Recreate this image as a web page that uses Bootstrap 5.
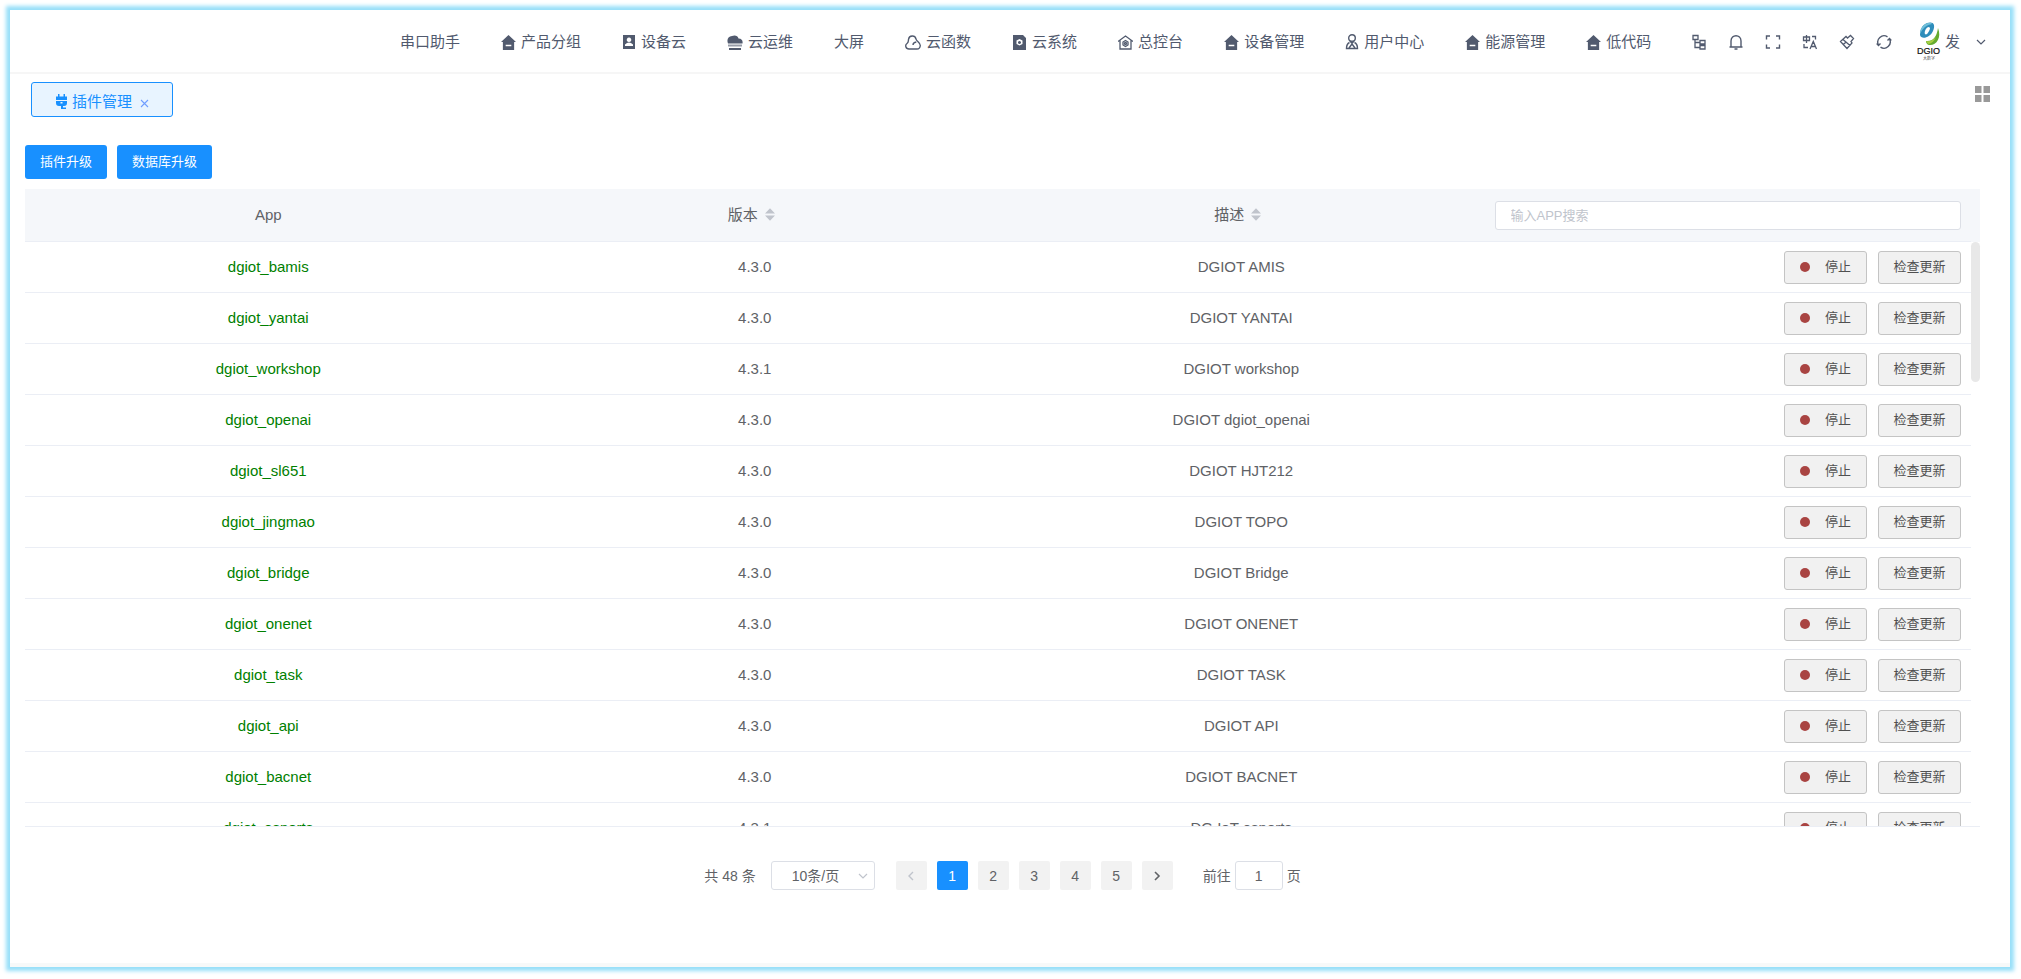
<!DOCTYPE html>
<html lang="zh-CN">
<head>
<meta charset="utf-8">
<meta name="viewport" content="width=device-width, initial-scale=1">
<title>插件管理</title>
<link rel="stylesheet" href="https://cdn.jsdelivr.net/npm/bootstrap@5.3.0/dist/css/bootstrap.min.css">
<style>
:root{--brand:#1890ff;--ink:#515a6e;--text:#606266;--rule:#ebeef5}
body{font-family:"Liberation Sans","Noto Sans CJK SC",sans-serif;font-size:14px;line-height:20px;font-weight:400;color:var(--text);background:#fff;min-height:100vh;padding:10px 11px 12px 10px}
.shell{min-height:calc(100vh - 22px);box-shadow:0 0 4px 4px #96dff9;background:#fff;border-bottom:4px solid #f7f9f9}
svg{display:block;flex:none}
.topbar{height:64px;border-bottom:2px solid #f6f6f6;padding:2px 24px 0 390px;color:var(--ink);font-size:15px}
.topbar a{color:var(--ink);text-decoration:none}
.menu-links{gap:41px}
.menu-links a{display:flex;align-items:center;gap:5px;white-space:nowrap}
.tool{border:0;background:none;padding:0;color:var(--ink)}
.tools{gap:21px}
.brand-mark{overflow:visible}
.tabs-row{padding:8px 20px 0 21px}
.page-tab{border:1px solid var(--brand);background:#e8f4ff;color:var(--brand);border-radius:3px;height:35px;font-size:15px;padding:4px 22px 0 23px}
.page-tab a{color:inherit;text-decoration:none}
.tab-close{border:0;background:none;color:#6f9dff;padding:0}
.content{padding:28px 30px 0 15px}
.run-bar{gap:10px}
.btn-run{height:34px;border:0;border-radius:3px;background:var(--brand);color:#fff;font-size:13px;line-height:20px;padding:0 15px}
.grid-frame{margin-top:10px;border-bottom:1px solid var(--rule);background:linear-gradient(#f5f7fa,#f5f7fa) 0 0/100% 53px no-repeat}
.grid-scroll{height:calc(100vh - 342px);overflow-y:auto;margin-right:9px;scrollbar-width:none}
.grid-scroll::-webkit-scrollbar{display:none}
.plugin-grid{table-layout:fixed;width:100%;text-align:center;border-collapse:separate;border-spacing:0;font-size:15px}
.plugin-grid th,.plugin-grid td{width:25%;padding:0 10px;height:51px;border-bottom:1px solid var(--rule);vertical-align:middle;font-weight:400}
.plugin-grid th{height:53px;background:#f5f7fa;position:sticky;top:0}
.grid-thumb{position:absolute;right:0;top:53px;width:9px;height:140px;border-radius:5px;background:#e8e8e8}
.app-name{color:green}
.sort-mark{display:inline-block;margin:0 7px;vertical-align:-1px}
.find-box{height:29px;border:1px solid #dcdfe6;border-radius:3px;font-size:13px;padding:0 15px;width:100%;display:block}
.find-box::placeholder{color:#c0c4cc;opacity:1}
.actions{gap:11px}
.btn-row{width:83px;height:33px;border:1px solid #c4c4c4;border-radius:3px;background:#f1f1f1;color:#505050;font-size:13px;line-height:20px;padding:0}
.btn-stop{gap:15px}
.dot{width:10px;height:10px;border-radius:50%;background:#a94442}
.pager{padding:34px 0 40px}
.pages{gap:10px;margin:0 30px 0 21px}
.pg{width:31px;height:29px;border:0;border-radius:2px;background:#f2f2f2;color:var(--text);padding:0}
.pg.on{background:var(--brand);color:#fff}
.pg:disabled{color:#c0c4cc}
.size-wrap{margin-left:15px}
.size-pick{width:104px;height:29px;border:1px solid #dcdfe6;border-radius:3px;background:#fff;color:var(--text);appearance:none;padding:0 0 0 20px}
.size-arrow{right:7px;top:10px;color:#c0c4cc;pointer-events:none}
.jump{width:48px;height:29px;border:1px solid #dcdfe6;border-radius:3px;text-align:center;color:var(--text);padding:0;margin:0 4px}
</style>
</head>
<body>
<svg class="d-none">
<symbol id="home" viewBox="0 0 16 16"><path fill="currentColor" fill-rule="evenodd" d="M8 0 16 7.500H14V16H2V7.500H0ZM5 10.500V12H11V10.500Z"/></symbol>
<symbol id="sort" viewBox="0 0 11 14"><path fill="#c0c4cc" d="M5.500 0 11 6H0ZM0 8H11L5.500 14Z"/></symbol>
</svg>
<div class="shell">
<nav class="topbar d-flex justify-content-between align-items-center">
<div class="menu-links d-flex align-items-center">
<a href="#">串口助手</a>
<a href="#"><svg width="15" height="15"><use href="#home"/></svg>产品分组</a>
<a href="#"><svg width="14" height="14" viewBox="0 0 14 14"><path fill="currentColor" fill-rule="evenodd" d="M1 0H13V14H1ZM7 2.500a2.300 2.300 0 1 0 .01 0ZM3 11H11V9.500Q9 7.500 7 7.500T3 9.500Z"/></svg>设备云</a>
<a href="#"><svg width="16" height="15" viewBox="0 0 16 15"><path fill="currentColor" d="M1 8.500C-.5 5 1 1 5 1C8-.5 11 1 11.500 3.500C15 3.500 16 6 15.500 8.500ZM2 13H14V15H2Z"/><path fill="currentColor" opacity=".6" d="M1 9.500H15V11.500H1Z"/></svg>云运维</a>
<a href="#">大屏</a>
<a href="#"><svg width="16" height="15" viewBox="0 0 16 15" fill="none" stroke="currentColor" stroke-width="1.400"><path d="M4 14C.5 14-.2 10 2 8.500C3.500 7.500 3.200 7 3.500 4.500C4.200 0 10 0 11 4C11.400 6.500 15.300 7.500 15.300 10.500Q15 14 12 14ZM8 10Q8 7.500 11.300 7"/></svg>云函数</a>
<a href="#"><svg width="15" height="15" viewBox="0 0 15 15"><path fill="currentColor" fill-rule="evenodd" d="M1 0H11L14 3V15H1ZM7.500 4 10.500 5.500V9L7.500 10.500 4.500 9V5.500ZM7.500 6a1.500 1.500 0 1 1-.01 0Z"/></svg>云系统</a>
<a href="#"><svg width="15" height="15" viewBox="0 0 15 15" fill="none" stroke="currentColor" stroke-width="1.300"><path d="M0 6.500 7.500 1 15 6.500M2 5V14H13V5M7.500 5.500 10 7V10L7.500 11.500 5 10V7Z"/><circle cx="7.500" cy="8.500" r="1"/></svg>总控台</a>
<a href="#"><svg width="15" height="15"><use href="#home"/></svg>设备管理</a>
<a href="#"><svg width="14" height="16" viewBox="0 0 14 16" fill="none" stroke="currentColor" stroke-width="1.400"><circle cx="7" cy="4" r="3.300"/><path d="M5 7 7 9.500 9 7M4.500 8.500Q1.500 10 1.500 14.500H12.500Q12.500 10 9.500 8.500M4 14 7 10 10 14"/></svg>用户中心</a>
<a href="#"><svg width="15" height="15"><use href="#home"/></svg>能源管理</a>
<a href="#"><svg width="15" height="15"><use href="#home"/></svg>低代码</a>
</div>
<div class="tools d-flex align-items-center">
<button class="tool" aria-label="结构"><svg width="16" height="16" viewBox="0 0 16 16" fill="none" stroke="currentColor" stroke-width="1.300"><path d="M2 1.500H7V5.500H2ZM4 5.500V13.500H9M4 8.500H9M9 6.500H14V10H9ZM9 11.500H14V15H9Z"/></svg></button>
<button class="tool" aria-label="通知"><svg width="16" height="16" viewBox="0 0 16 16" fill="none" stroke="currentColor" stroke-width="1.400"><path d="M3 13V7C3 0 13 0 13 7V13M1.500 13H14.500M6.500 15H9.500"/></svg></button>
<button class="tool" aria-label="全屏"><svg width="16" height="16" viewBox="0 0 16 16" fill="none" stroke="currentColor" stroke-width="1.400"><path d="M5 2H1.500V5.500M11 2H14.500V5.500M1.500 10.500V14H5M14.500 10.500V14H11"/></svg></button>
<button class="tool" aria-label="语言"><svg width="16" height="16" viewBox="0 0 16 16" fill="none" stroke="currentColor" stroke-width="1.300"><path d="M1.500 3H7.500V6.500H1.500ZM4.500 1V9M10 2.500H13.500V5.500M2 10V13.500H6M8 15 11.300 7.500 14.500 15M9 12.500H13.500"/></svg></button>
<button class="tool" aria-label="主题"><svg width="16" height="16" viewBox="0 0 16 16" fill="none" stroke="currentColor" stroke-width="1.300"><path d="M1.500 7.500 7 2.500 8.500 4 11.500 1.500 14.500 4.500 12 7.500 13 9 8 14.500ZM4 5.500 11 11.500M4.500 10.500 6.500 8.500"/></svg></button>
<button class="tool" aria-label="刷新"><svg width="16" height="16" viewBox="0 0 16 16" fill="none" stroke="currentColor" stroke-width="1.400"><path d="M2.500 11A6.300 6.300 0 0 1 11.500 2.800M13.500 5A6.300 6.300 0 0 1 4.500 13.200M.7 9.500 2.500 11.500 4.500 9.500M11.500 6.500 13.500 4.500 15.300 6.500"/></svg></button>
<a href="#" class="d-flex align-items-center"><svg class="brand-mark ms-1 me-1" width="24" height="40" viewBox="0 0 24 40"><path fill="#2e8dbb" fill-rule="evenodd" d="M10 1C16-1 19 2 16 9C13 16 4 18 3 13C3 8 5 3 10 1ZM12 5C9 5 7 10 8 12C10 14 13 8 13 6Z"/><path fill="#70bfd9" d="M3 12C3 7 6 2 11 1Q14 0 15 2Q7 3 3 12Z"/><path fill="#65ab2f" d="M21 6C25 16 19 24 12 23Q9 22 9 19Q19 20 21 6Z"/><path fill="#a5ce42" d="M9 19Q15 20 19 15Q16 22 11 22Z"/><text x="0" y="32" font-size="9" fill="#111" stroke="#111" stroke-width=".2">DGIO</text><text x="6" y="38" font-size="4" fill="#555">大数字</text></svg>发<svg class="ms-3" width="10" height="10" viewBox="0 0 10 10" fill="none" stroke="currentColor" stroke-width="1.200"><path d="M1 3 5 7 9 3"/></svg></a>
</div>
</nav>
<div class="tabs-row d-flex justify-content-between align-items-start">
<div class="page-tab d-flex align-items-center">
<svg width="13" height="16" viewBox="0 0 13 16"><path fill="currentColor" fill-rule="evenodd" d="M3 0H4.500V2.500H8.500V0H10V2.500H12V6H1V2.500H3ZM1 7H12V9Q12 12 9 12H8V13.500H11V15H6V12H4Q1 12 1 9ZM5.500 8V9.500H7.500V8Z"/></svg>
<a href="#" class="ms-1">插件管理</a>
<button class="tab-close ms-2" aria-label="关闭"><svg width="10" height="16" viewBox="0 0 10 16" fill="none" stroke="currentColor" stroke-width="1.100"><path d="M1 6 8 13M8 6 1 13"/></svg></button>
</div>
<button class="tool mt-1" aria-label="更多"><svg width="15" height="16" viewBox="0 0 15 16"><path fill="#999" d="M0 0H6.500V7H0ZM8.500 0H15V7H8.500ZM0 9H6.500V16H0ZM8.500 9H15V16H8.500Z"/></svg></button>
</div>
<main class="content">
<div class="run-bar d-flex">
<button class="btn-run">插件升级</button>
<button class="btn-run">数据库升级</button>
</div>
<div class="grid-frame position-relative">
<div class="grid-scroll">
<table class="plugin-grid">
<thead><tr><th>App</th>
<th>版本<svg class="sort-mark" width="10" height="13"><use href="#sort"/></svg></th>
<th>描述<svg class="sort-mark" width="10" height="13"><use href="#sort"/></svg></th>
<th><input class="find-box" type="text" placeholder="输入APP搜索" aria-label="输入APP搜索"></th></tr></thead>
<tbody id="rows"></tbody>
</table>
</div>
<div class="grid-thumb"></div>
</div>
<div class="pager d-flex justify-content-center align-items-center">
<span>共 48 条</span>
<div class="size-wrap position-relative">
<select class="size-pick" aria-label="每页条数"><option>10条/页</option><option>20条/页</option></select>
<svg class="size-arrow position-absolute" width="10" height="10" viewBox="0 0 10 10" fill="none" stroke="currentColor" stroke-width="1.200"><path d="M1 3 5 7 9 3"/></svg>
</div>
<div class="pages d-flex">
<button class="pg d-flex align-items-center justify-content-center" disabled aria-label="上一页"><svg width="8" height="12" viewBox="0 0 8 12" fill="none" stroke="currentColor" stroke-width="1.400"><path d="M6 2 2 6 6 10"/></svg></button>
<button class="pg on">1</button><button class="pg">2</button><button class="pg">3</button><button class="pg">4</button><button class="pg">5</button>
<button class="pg d-flex align-items-center justify-content-center" aria-label="下一页"><svg width="8" height="12" viewBox="0 0 8 12" fill="none" stroke="currentColor" stroke-width="1.600"><path d="M2 2 6 6 2 10"/></svg></button>
</div>
<label for="jump">前往</label><input id="jump" class="jump" type="text" value="1"><span>页</span>
</div>
</main>
</div>
<script>
const plugins = [
["dgiot_bamis","4.3.0","DGIOT AMIS"],
["dgiot_yantai","4.3.0","DGIOT YANTAI"],
["dgiot_workshop","4.3.1","DGIOT workshop"],
["dgiot_openai","4.3.0","DGIOT dgiot_openai"],
["dgiot_sl651","4.3.0","DGIOT HJT212"],
["dgiot_jingmao","4.3.0","DGIOT TOPO"],
["dgiot_bridge","4.3.0","DGIOT Bridge"],
["dgiot_onenet","4.3.0","DGIOT ONENET"],
["dgiot_task","4.3.0","DGIOT TASK"],
["dgiot_api","4.3.0","DGIOT API"],
["dgiot_bacnet","4.3.0","DGIOT BACNET"],
["dgiot_esports","4.3.1","DG IoT esports"]
];
document.getElementById("rows").innerHTML = plugins.map(([app, version, note]) => `<tr>
<td class="app-name">${app}</td><td>${version}</td><td>${note}</td>
<td><div class="actions d-flex justify-content-end">
<button class="btn-row btn-stop d-flex align-items-center justify-content-center"><span class="dot"></span>停止</button>
<button class="btn-row">检查更新</button></div></td></tr>`).join("");
</script>
<script src="https://cdn.jsdelivr.net/npm/bootstrap@5.3.0/dist/js/bootstrap.bundle.min.js"></script>
</body>
</html>
